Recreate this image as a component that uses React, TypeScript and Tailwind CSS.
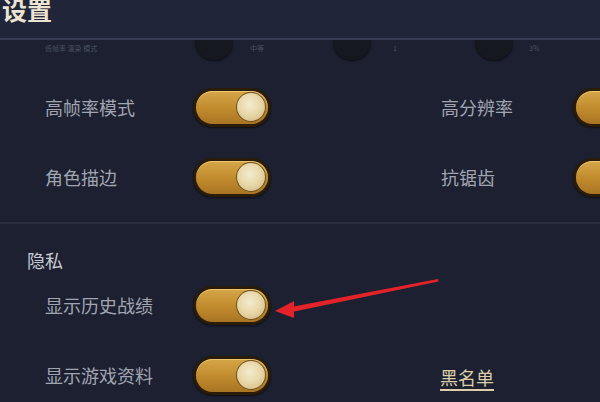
import React from "react";

function Toggle() {
  return (
    <div className="relative w-[78px] h-[39px] shrink-0 rounded-full bg-[#2a1c08] p-[3px] shadow-[0_1px_2px_rgba(0,0,0,0.6)]">
      <div className="flex items-center justify-end pr-[2px] w-full h-full rounded-full bg-[linear-gradient(180deg,#d6a648_0%,#c08a2c_55%,#a97424_100%)] shadow-[inset_0_1px_0_rgba(255,230,160,0.5)]">
        <div className="w-[30px] h-[30px] rounded-full bg-[#6b5022] p-[1px]">
          <div className="w-full h-full rounded-full bg-[radial-gradient(circle_at_45%_40%,#f4ead0_0%,#e9d9aa_45%,#cfb27a_100%)]" />
        </div>
      </div>
    </div>
  );
}

function Label({ children, className = "" }: { children: React.ReactNode; className?: string }) {
  return <div className={`shrink-0 text-[18px] text-[#a1a5b2] whitespace-nowrap ${className}`}>{children}</div>;
}

function Row({ label, right }: { label: string; right?: React.ReactNode }) {
  return (
    <div className="flex items-center h-[70px]">
      <Label className="w-[193px] pl-[45px]">{label}</Label>
      <Toggle />
      {right}
    </div>
  );
}

function RightPair({ label }: { label: string }) {
  return (
    <>
      <Label className="ml-[170px] w-[132px]">{label}</Label>
      <Toggle />
    </>
  );
}

function Knob() {
  return <div className="shrink-0 w-[38px] h-[36px] -mt-[16px] rounded-full bg-[#15181f] shadow-[0_1px_2px_rgba(0,0,0,0.6)]" />;
}

function Faint({ children }: { children: React.ReactNode }) {
  return <div className="text-[7px] leading-[10px] text-[#4a5064] whitespace-nowrap">{children}</div>;
}

export default function App() {
  return (
    <div
      className="relative w-[600px] h-[402px] overflow-hidden bg-[#1c2030]"
      style={{ fontFamily: '"Noto Sans CJK SC", "Noto Sans", sans-serif' }}
    >
      <div className="relative z-10 h-[40px] overflow-hidden bg-[#20253a] border-b-2 border-[#363d54]">
        <div className="pl-[2px] -mt-[8px] text-[25px] font-bold text-[#ece4d2] leading-[34px]">设置</div>
      </div>
      <div className="h-[32px] flex items-start">
        <div className="shrink-0 w-[195px] pl-[45px] pt-[3px]"><Faint>低帧率 渲染 模式</Faint></div>
        <Knob />
        <div className="shrink-0 w-[100px] pl-[17px] pt-[3px]"><Faint>中等</Faint></div>
        <Knob />
        <div className="shrink-0 w-[104px] pl-[22px] pt-[3px]"><Faint>1</Faint></div>
        <Knob />
        <div className="shrink-0 pl-[16px] pt-[3px]"><Faint>3%</Faint></div>
      </div>
      <Row label="高帧率模式" right={<RightPair label="高分辨率" />} />
      <Row label="角色描边" right={<RightPair label="抗锯齿" />} />
      <div className="mt-[10px] h-[2px] bg-[#282d40]" />
      <div className="h-[36px] pl-[27px] pt-[24px] text-[18px] leading-[24px] text-[#c9cbd4]">隐私</div>
      <div className="h-[10px]" />
      <Row label="显示历史战绩" />
      <Row
        label="显示游戏资料"
        right={
          <div className="shrink-0 ml-[169px] mt-[4px] text-[18px] text-[#ddceaa] underline underline-offset-[4px] decoration-[#ddceaa] decoration-2">
            黑名单
          </div>
        }
      />
      <svg className="absolute left-0 top-0 z-20 pointer-events-none" width="600" height="402" viewBox="0 0 600 402">
        <polygon points="438,279 438.5,281.5 292,312 291,307" fill="#e3222a" />
        <polygon points="275,311 294,301 294,318" fill="#e3222a" />
      </svg>
    </div>
  );
}
